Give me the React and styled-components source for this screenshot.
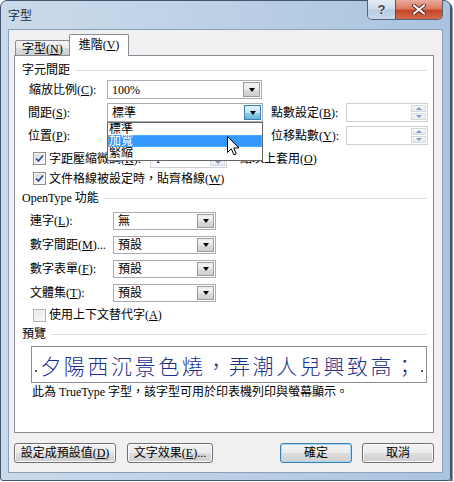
import React from "react";
import styled, { createGlobalStyle } from "styled-components";

const GlobalStyle = createGlobalStyle`
  html, body { margin: 0; padding: 0; background: #fff; }
  body {
    font-family: "Liberation Serif", "Noto Sans CJK TC", serif;
    font-size: 12px;
    color: #000;
  }
  u { text-underline-offset: 1px; }
`;

const Window = styled.div`
  width: 451px;
  height: 481px;
  box-sizing: border-box;
  border: 1px solid #42556c;
  border-radius: 7px 7px 3px 3px;
  background: linear-gradient(90deg, #cbdaea 0%, #bdd1e6 45%, #aac3df 100%);
  box-shadow: 1px 1px 0 #555, 2px 2px 0 #999;
  padding: 0 7px 7px 7px;
  display: flex;
  flex-direction: column;
`;

const TitleBar = styled.div`
  height: 28px;
  flex: none;
  display: flex;
  align-items: flex-start;
`;

const Title = styled.div`
  font-family: "Noto Sans CJK TC", sans-serif;
  font-size: 12px;
  line-height: 14px;
  padding-top: 7px;
  color: #1e2a38;
`;

const Controls = styled.div`
  margin-left: auto;
  margin-top: -1px;
  display: flex;
  border: 1px solid #53657b;
  border-top: none;
  border-radius: 0 0 5px 5px;
  overflow: hidden;
  height: 19px;
`;

const CtrlButton = styled.div`
  width: ${(p) => p.$w}px;
  display: flex;
  align-items: center;
  justify-content: center;
  background: ${(p) =>
    p.$close
      ? "linear-gradient(#e9ab9e 0%, #dc7b64 45%, #c8442a 55%, #d26a4a 100%)"
      : "linear-gradient(#e3ecf5 0%, #cfdcea 45%, #b7cbe0 55%, #c8d9ea 100%)"};
  border-left: ${(p) => (p.$close ? "1px solid #6b4a48" : "none")};
  font-family: "Liberation Sans", sans-serif;
  font-weight: bold;
  font-size: 13px;
  color: #3a4452;
  text-shadow: 0 0 2px #fff;
`;

const Client = styled.div`
  flex: 1;
  background: #f0f0f0;
  border: 1px solid #8ba0bb;
  padding: 5px 8px 0 5px;
  display: flex;
  flex-direction: column;
`;

const TabStrip = styled.div`
  display: flex;
  align-items: flex-end;
  height: 21px;
  padding-left: 1px;
  margin-bottom: -1px;
  position: relative;
  z-index: 2;
`;

const Tab = styled.div`
  box-sizing: border-box;
  height: ${(p) => (p.$active ? 22 : 16)}px;
  padding: ${(p) => (p.$active ? "3px 9px 0" : "1px 6px 0")};
  margin-left: ${(p) => (p.$active ? -1 : 0)}px;
  border: 1px solid #898c95;
  border-bottom: ${(p) => (p.$active ? "none" : "1px solid #898c95")};
  border-radius: 2px 2px 0 0;
  background: ${(p) =>
    p.$active ? "#fff" : "linear-gradient(#f3f3f3 0%, #ebebeb 50%, #dcdcdc 51%, #cfcfcf 100%)"};
  line-height: 14px;
  white-space: nowrap;
`;

const Panel = styled.div`
  height: 378px;
  flex: none;
  box-sizing: border-box;
  border: 1px solid #898c95;
  background: #fff;
  padding: 7px 6px 0 7px;
  display: flex;
  flex-direction: column;
`;

const GroupHeader = styled.div`
  display: flex;
  align-items: center;
  height: 14px;
  line-height: 14px;
  margin-top: ${(p) => p.$mt || 0}px;
  &::after {
    content: "";
    flex: 1;
    height: 1px;
    margin-left: 5px;
    background: #d5dfe5;
  }
`;

const Row = styled.div`
  display: flex;
  align-items: center;
  height: ${(p) => p.$h}px;
  margin-top: ${(p) => p.$mt}px;
  padding-left: ${(p) => p.$indent}px;
  line-height: 14px;
  white-space: nowrap;
`;

const Label = styled.div`
  width: ${(p) => p.$w}px;
  margin-left: ${(p) => p.$ml || 0}px;
  flex: none;
  white-space: nowrap;
  overflow: visible;
`;

const Field = styled.div`
  position: relative;
  box-sizing: border-box;
  width: ${(p) => p.$w}px;
  height: ${(p) => p.$h}px;
  border: 1px solid ${(p) => (p.$dim ? "#cdd0d6" : "#abadb3")};
  background: #fff;
  display: flex;
  align-items: center;
  flex: none;
`;

const Value = styled.div`
  flex: 1;
  padding-left: 4px;
  line-height: 14px;
`;

const DropButton = styled.div`
  box-sizing: border-box;
  width: 17px;
  height: calc(100% - 2px);
  margin-right: 1px;
  border: 1px solid ${(p) => (p.$hot ? "#3c7fb1" : "#9a9a9a")};
  background: ${(p) =>
    p.$hot
      ? "linear-gradient(#e5f4fc 0%, #c4e5f6 50%, #98d1ef 51%, #68b3db 100%)"
      : "linear-gradient(#f2f2f2 0%, #ebebeb 50%, #dddddd 51%, #cfcfcf 100%)"};
  display: flex;
  align-items: center;
  justify-content: center;
  &::after {
    content: "";
    border-left: 3.5px solid transparent;
    border-right: 3.5px solid transparent;
    border-top: 4px solid #000;
  }
`;

const SpinButtons = styled.div`
  box-sizing: border-box;
  width: 15px;
  height: calc(100% - 2px);
  margin-right: 1px;
  display: flex;
  flex-direction: column;
  gap: 1px;
`;

const SpinHalf = styled.div`
  flex: 1;
  border: 1px solid #d6d9de;
  background: linear-gradient(#f7f8f9, #e6e9ed);
  display: flex;
  align-items: center;
  justify-content: center;
  &::after {
    content: "";
    border-left: 3px solid transparent;
    border-right: 3px solid transparent;
    ${(p) => (p.$up ? "border-bottom" : "border-top")}: 3px solid #7f9cc4;
  }
`;

const DropList = styled.div`
  position: absolute;
  z-index: 10;
  left: -1px;
  top: 18px;
  width: 156px;
  box-sizing: border-box;
  border: 1px solid #646464;
  background: #fff;
  padding-bottom: 1px;
`;

const ListItem = styled.div`
  height: 12px;
  line-height: 12px;
  padding-left: 1px;
  box-sizing: border-box;
  background: ${(p) => (p.$sel ? "#3399ff" : "#fff")};
  color: ${(p) => (p.$sel ? "#fff" : "#000")};
  outline: ${(p) => (p.$sel ? "1px dotted #e0a060" : "none")};
  outline-offset: -1px;
  overflow: hidden;
`;

const Cursor = styled.svg`
  position: absolute;
  left: 119px;
  top: 13px;
  width: 13px;
  height: 20px;
`;

const CheckBox = styled.div`
  box-sizing: border-box;
  width: 13px;
  height: 13px;
  flex: none;
  margin-right: 3px;
  border: 1px solid ${(p) => (p.$off ? "#b4b4b4" : "#8e8f8f")};
  background: ${(p) =>
    p.$off
      ? "linear-gradient(135deg, #e6e6e6, #fafafa)"
      : "linear-gradient(135deg, #d6d6d6, #ffffff)"};
  box-shadow: inset 0 0 0 1px #f4f4f4;
  display: flex;
  align-items: center;
  justify-content: center;
`;

const PreviewBox = styled.div`
  box-sizing: border-box;
  height: 37px;
  margin: 5px 0 0 9px;
  border: 1px solid #898c95;
  display: flex;
  align-items: center;
  padding: 0 3px;
`;

const Mark = styled.div`
  width: 2px;
  height: 2px;
  background: #555;
  align-self: flex-end;
  margin-bottom: 10px;
`;

const PreviewText = styled.div`
  flex: 1;
  text-align: center;
  font-family: "Noto Sans CJK TC", sans-serif;
  font-size: 21px;
  font-weight: 300;
  letter-spacing: 2.6px;
  color: #1a2f8c;
  line-height: 30px;
  white-space: nowrap;
`;

const Note = styled.div`
  margin: 2px 0 0 10px;
  line-height: 14px;
  height: 14px;
`;

const ButtonBar = styled.div`
  display: flex;
  margin-top: 10px;
  gap: 11px;
`;

const Button = styled.div`
  box-sizing: border-box;
  width: ${(p) => p.$w}px;
  height: 20px;
  margin-left: ${(p) => p.$ml || 0}px;
  border: 1px solid ${(p) => (p.$default ? "#3c7fb1" : "#707070")};
  border-radius: 3px;
  background: linear-gradient(#f2f2f2 0%, #ebebeb 50%, #dddddd 51%, #cfcfcf 100%);
  box-shadow: inset 0 0 0 1px ${(p) => (p.$default ? "#a7d9f5" : "#fcfcfc")};
  display: flex;
  align-items: center;
  justify-content: center;
  line-height: 14px;
  white-space: nowrap;
`;

const Check = () => (
  <svg width="9" height="9" viewBox="0 0 9 9">
    <path d="M1 4.5 L3.4 7 L8 1.5" fill="none" stroke="#2c4f91" strokeWidth="1.8" />
  </svg>
);

const Combo = ({ w, h = 19, value, hot, children }) => (
  <Field $w={w} $h={h}>
    <Value>{value}</Value>
    <DropButton $hot={hot} />
    {children}
  </Field>
);

const Spinner = ({ w, h = 19, value }) => (
  <Field $w={w} $h={h} $dim>
    <Value>{value}</Value>
    <SpinButtons>
      <SpinHalf $up />
      <SpinHalf />
    </SpinButtons>
  </Field>
);

const otRows = [
  { label: <>連字(<u>L</u>):</>, value: "無", mt: 7 },
  { label: <>數字間距(<u>M</u>)...</>, value: "預設", mt: 6 },
  { label: <>數字表單(<u>F</u>):</>, value: "預設", mt: 6 },
  { label: <>文體集(<u>T</u>):</>, value: "預設", mt: 6 },
];

export default function App() {
  return (
    <>
      <GlobalStyle />
      <Window>
        <TitleBar>
          <Title>字型</Title>
          <Controls>
            <CtrlButton $w={27}>?</CtrlButton>
            <CtrlButton $w={46} $close>
              <svg width="14" height="11" viewBox="0 0 14 11">
                <path d="M2 1.5 L12 9.5 M12 1.5 L2 9.5" stroke="#5a2a20" strokeWidth="4" strokeLinecap="round" />
                <path d="M2 1.5 L12 9.5 M12 1.5 L2 9.5" stroke="#fff" strokeWidth="2.2" strokeLinecap="round" />
              </svg>
            </CtrlButton>
          </Controls>
        </TitleBar>
        <Client>
          <TabStrip>
            <Tab>字型(<u>N</u>)</Tab>
            <Tab $active>進階(<u>V</u>)</Tab>
          </TabStrip>
          <Panel>
            <GroupHeader>字元間距</GroupHeader>
            <Row $h={19} $mt={3} $indent={7}>
              <Label $w={78}>縮放比例(<u>C</u>):</Label>
              <Combo w={155} value="100%" />
            </Row>
            <Row $h={19} $mt={4} $indent={6}>
              <Label $w={79}>間距(<u>S</u>):</Label>
              <Combo w={156} value="標準" hot>
                <DropList>
                  <ListItem>標準</ListItem>
                  <ListItem $sel>加寬</ListItem>
                  <ListItem>緊縮</ListItem>
                  <Cursor viewBox="0 0 13 20">
                    <path
                      d="M0.5 0.5 L0.5 16.5 L4.3 12.8 L6.9 18.9 L9.3 17.9 L6.8 11.9 L12 11.9 Z"
                      fill="#fff"
                      stroke="#000"
                      strokeWidth="1"
                      strokeLinejoin="miter"
                    />
                  </Cursor>
                </DropList>
              </Combo>
              <Label $w={75} $ml={8}>點數設定(<u>B</u>):</Label>
              <Spinner w={82} />
            </Row>
            <Row $h={19} $mt={4} $indent={6}>
              <Label $w={79}>位置(<u>P</u>):</Label>
              <Combo w={156} value="" />
              <Label $w={75} $ml={8}>位移點數(<u>Y</u>):</Label>
              <Spinner w={82} />
            </Row>
            <Row $h={19} $mt={4} $indent={11}>
              <CheckBox><Check /></CheckBox>
              <Label $w={101}>字距壓縮微調(<u>K</u>):</Label>
              <Spinner w={77} value="1" />
              <Label $w={100} $ml={13}>點以上套用(<u>O</u>)</Label>
            </Row>
            <Row $h={15} $mt={3} $indent={11}>
              <CheckBox><Check /></CheckBox>
              <Label $w={200}>文件格線被設定時，貼齊格線(<u>W</u>)</Label>
            </Row>

            <GroupHeader $mt={5}>OpenType 功能</GroupHeader>
            {otRows.map((r, i) => (
              <Row key={i} $h={18} $mt={r.mt} $indent={8}>
                <Label $w={83}>{r.label}</Label>
                <Combo w={103} h={18} value={r.value} />
              </Row>
            ))}
            <Row $h={14} $mt={6} $indent={11}>
              <CheckBox $off />
              <Label $w={200}>使用上下文替代字(<u>A</u>)</Label>
            </Row>

            <GroupHeader $mt={5}>預覽</GroupHeader>
            <PreviewBox>
              <Mark />
              <PreviewText>夕陽西沉景色燒，弄潮人兒興致高；</PreviewText>
              <Mark />
            </PreviewBox>
            <Note>此為 TrueType 字型，該字型可用於印表機列印與螢幕顯示。</Note>
          </Panel>
          <ButtonBar>
            <Button $w={102}>設定成預設值(<u>D</u>)</Button>
            <Button $w={86}>文字效果(<u>E</u>)...</Button>
            <Button $w={72} $ml={56} $default>確定</Button>
            <Button $w={72} $ml={-1}>取消</Button>
          </ButtonBar>
        </Client>
      </Window>
    </>
  );
}
